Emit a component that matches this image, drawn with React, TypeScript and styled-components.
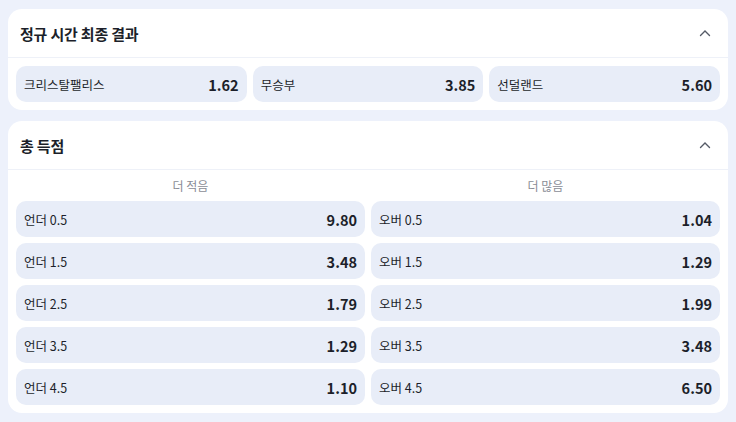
import styled, { createGlobalStyle } from "styled-components";

const GlobalStyle = createGlobalStyle`
  html, body {
    margin: 0;
    background: #edf1fb;
    font-family: "Noto Sans CJK KR", "Noto Sans", sans-serif;
    color: #1c1f2a;
  }
`;

const Page = styled.main`
  display: flex;
  flex-direction: column;
  gap: 11px;
  padding: 9px 8px;
`;

const Card = styled.section`
  background: #ffffff;
  border-radius: 14px;
  padding-bottom: 8px;
`;

const Header = styled.header`
  height: 48px;
  display: flex;
  align-items: center;
  justify-content: space-between;
  padding: 0 17px 0 12px;
  border-bottom: 1px solid #eef1f8;
`;

const Title = styled.h2`
  margin: 0;
  font-size: 15px;
  font-weight: 700;
  letter-spacing: -0.2px;
`;

const Body = styled.div<{ $cols: number }>`
  display: grid;
  grid-template-columns: repeat(${(p) => p.$cols}, 1fr);
  gap: 6px;
  padding: 8px 8px 0;
`;

const Column = styled.div`
  display: flex;
  flex-direction: column;
  gap: 6px;
`;

const ColumnLabel = styled.div`
  height: 31px;
  margin-top: -8px;
  display: flex;
  align-items: center;
  justify-content: center;
  font-size: 12px;
  color: #8a8d96;
  margin-bottom: -6px;
`;

const Odd = styled.button`
  height: 36px;
  display: flex;
  align-items: center;
  justify-content: space-between;
  padding: 0 8px 0 8px;
  border: none;
  border-radius: 10px;
  background: #e8edf8;
  font-family: inherit;
  color: inherit;
  cursor: pointer;
`;

const Label = styled.span`
  font-size: 12.5px;
  font-weight: 400;
`;

const Price = styled.span`
  font-size: 14.5px;
  font-weight: 700;
`;

const Chevron = () => (
  <svg width="12" height="8" viewBox="0 0 12 8">
    <path d="M1.5 6.5 L6 2 L10.5 6.5" fill="none" stroke="#555a66" strokeWidth="1.4" strokeLinecap="round" />
  </svg>
);

const result = [
  { label: "크리스탈팰리스", price: "1.62" },
  { label: "무승부", price: "3.85" },
  { label: "선덜랜드", price: "5.60" },
];

const under = [
  ["0.5", "9.80"],
  ["1.5", "3.48"],
  ["2.5", "1.79"],
  ["3.5", "1.29"],
  ["4.5", "1.10"],
];

const over = [
  ["0.5", "1.04"],
  ["1.5", "1.29"],
  ["2.5", "1.99"],
  ["3.5", "3.48"],
  ["4.5", "6.50"],
];

export default function App() {
  return (
    <>
      <GlobalStyle />
      <Page>
        <Card>
          <Header>
            <Title>정규 시간 최종 결과</Title>
            <Chevron />
          </Header>
          <Body $cols={3}>
            {result.map((r) => (
              <Odd key={r.label}>
                <Label>{r.label}</Label>
                <Price>{r.price}</Price>
              </Odd>
            ))}
          </Body>
        </Card>
        <Card>
          <Header>
            <Title>총 득점</Title>
            <Chevron />
          </Header>
          <Body $cols={2}>
            <Column>
              <ColumnLabel>더 적음</ColumnLabel>
              {under.map(([line, price]) => (
                <Odd key={line}>
                  <Label>언더 {line}</Label>
                  <Price>{price}</Price>
                </Odd>
              ))}
            </Column>
            <Column>
              <ColumnLabel>더 많음</ColumnLabel>
              {over.map(([line, price]) => (
                <Odd key={line}>
                  <Label>오버 {line}</Label>
                  <Price>{price}</Price>
                </Odd>
              ))}
            </Column>
          </Body>
        </Card>
      </Page>
    </>
  );
}
